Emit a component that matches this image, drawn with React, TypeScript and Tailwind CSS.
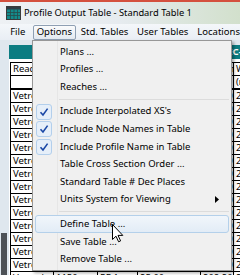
type MenuItem = { label: string; checked?: boolean; sub?: boolean; active?: boolean } | "sep";

const menuItems: MenuItem[] = [
  { label: "Plans ..." },
  { label: "Profiles ..." },
  { label: "Reaches ..." },
  "sep",
  { label: "Include Interpolated XS's", checked: true },
  { label: "Include Node Names in Table", checked: true },
  { label: "Include Profile Name in Table", checked: true },
  { label: "Table Cross Section Order ..." },
  { label: "Standard Table # Dec Places" },
  { label: "Units System for Viewing", sub: true },
  "sep",
  { label: "Define Table ...", active: true },
  { label: "Save Table ..." },
  { label: "Remove Table ..." },
];

const colW = ["w-[44px]", "w-[44px]", "w-[40px]", "w-[63px]", "w-[33px]", "w-[40px]"];
const header = ["Reach", "River Sta", "Profile", "Q Total", "Min Ch El", "W.S. Elev"];
const units = ["", "", "", "(m3/s)", "(m)", "(m)"];

const rows = Array.from({ length: 15 }, (_, i) => [
  "Vetrovka",
  String(1850 - i * 50),
  "PF 1",
  "25.00",
  (212.4 - i * 0.3).toFixed(2),
  (213.9 - i * 0.3).toFixed(2),
]);

function GridIcon() {
  return (
    <svg width="15" height="14" viewBox="0 0 15 14" className="shrink-0">
      <rect x="0.5" y="0.5" width="14" height="13" fill="#138b8b" stroke="#3b3b3b" />
      <rect x="1" y="1" width="13" height="2.5" fill="#2f3d46" />
      <path d="M1 6.5H14M1 9.5H14M4.5 3.5V13M8 3.5V13M11.5 3.5V13" stroke="#2a4a4a" strokeWidth="0.8" />
    </svg>
  );
}

function Check() {
  return (
    <svg width="10" height="10" viewBox="0 0 10 10">
      <path d="M1.5 5.2 L4 8 L8.6 1.6" fill="none" stroke="#1b48a6" strokeWidth="1.6" />
    </svg>
  );
}

function Row({ cells }: { cells: string[] }) {
  return (
    <div className="flex h-[13px] shrink-0">
      {cells.map((c, i) => (
        <div
          key={i}
          className={`${colW[i]} shrink-0 overflow-hidden whitespace-nowrap border-b border-r border-black px-[2px] leading-[12px] ${
            i === 0 ? "border-l" : ""
          }`}
        >
          {c}
        </div>
      ))}
    </div>
  );
}

export default function App() {
  return (
    <div className="relative h-[275px] w-[240px] overflow-hidden bg-[#dfe7ee] font-['Noto_Sans',sans-serif] text-[9.5px] text-black">
      {/* edge of the window behind */}
      <div className="h-[2px] bg-[#d4503e]" />

      {/* title bar */}
      <div className="flex h-[22px] items-center gap-[3px] bg-gradient-to-r from-[#eef1f4] via-[#e6ebef] to-[#d2e0cc] pl-[6px]">
        <GridIcon />
        <span className="text-[9.3px]">Profile Output Table - Standard Table 1</span>
      </div>

      {/* menu bar */}
      <div className="flex h-[16px] items-center bg-gradient-to-b from-[#f4f7fa] to-[#e9eef4] pl-[3px]">
        <span className="w-[30px] text-center">File</span>
        <span className="flex h-[15px] w-[44px] items-center justify-center rounded-[2px] border border-[#8e9fb3] bg-gradient-to-b from-[#fafbfc] to-[#e3e9f0]">
          Options
        </span>
        <span className="w-[58px] text-center">Std. Tables</span>
        <span className="w-[60px] text-center">User Tables</span>
        <span className="pl-[5px]">Locations</span>
      </div>

      {/* window content */}
      <div className="flex h-[235px]">
        <div className="flex w-[9px] shrink-0 flex-col">
          <div className="mt-auto ml-[1px] h-[42px] w-[6px] bg-[#4d5156]" />
        </div>
        <div className="flex flex-1 flex-col overflow-hidden">
          <div className="h-[5px] shrink-0" />
          <div className="flex h-[14px] shrink-0 items-center bg-[#0b7c82] pl-[211px] font-bold whitespace-nowrap text-white">
            HEC-F Plan: Plan 1
          </div>
          <div className="flex flex-1 flex-col bg-white pt-[3px] pl-[1px]">
            <div className="border-t border-black">
              <Row cells={header} />
            </div>
            <div className="border-b border-black">
              <Row cells={units} />
            </div>
            {rows.map((r, i) => (
              <Row key={i} cells={r} />
            ))}
          </div>
        </div>
      </div>

      {/* Options dropdown */}
      <div className="absolute top-[40px] left-[32px] w-[200px] border border-[#979797] bg-[#f0f0f0] py-[2px] shadow-[2px_2px_3px_rgba(0,0,0,0.35)]">
        <div className="absolute top-0 bottom-0 left-[24px] w-[1px] bg-[#e6e6e6]" />
        {menuItems.map((it, i) =>
          it === "sep" ? (
            <div key={i} className="flex h-[7px] items-center">
              <div className="mr-[2px] ml-[26px] h-[1px] flex-1 bg-[#dcdcdc]" />
            </div>
          ) : (
            <div
              key={i}
              className={`relative mx-[2px] flex h-[17.6px] items-center rounded-[3px] border ${
                it.active
                  ? "border-[#b4d0ea] bg-gradient-to-b from-[#f1f6fb] to-[#e2ecf6]"
                  : "border-transparent"
              }`}
            >
              <div className="flex w-[24px] shrink-0 items-center">
                {it.checked && (
                  <div className="flex h-[16px] w-[16px] items-center justify-center rounded-[3px] border border-[#b3cfec] bg-[#e6eff9]">
                    <Check />
                  </div>
                )}
              </div>
              <span className="whitespace-nowrap">{it.label}</span>
              {it.sub && (
                <svg width="4" height="7" viewBox="0 0 4 7" className="mr-[9px] ml-auto">
                  <path d="M0 0 L4 3.5 L0 7 Z" fill="#000" />
                </svg>
              )}
            </div>
          )
        )}
      </div>

      {/* mouse pointer */}
      <svg width="12" height="19" viewBox="0 0 12 19" className="absolute top-[224px] left-[112px]">
        <path d="M0.5 0.5 L0.5 15.5 L4 12.2 L6.6 17.8 L8.6 16.9 L6 11.4 L10.8 11.4 Z" fill="#fff" stroke="#000" strokeWidth="1" strokeLinejoin="round" />
      </svg>
    </div>
  );
}
